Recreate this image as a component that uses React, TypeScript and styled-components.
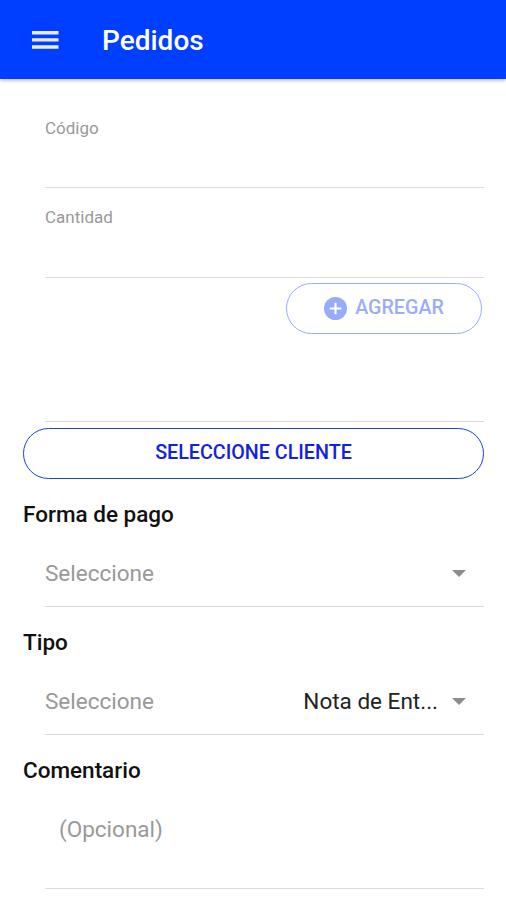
import React from 'react';
import styled, { createGlobalStyle } from 'styled-components';

const Global = createGlobalStyle`
  *, *::before, *::after { box-sizing: border-box; }
  body { margin: 0; background: #fff; font-family: Roboto, sans-serif; color: #111; }
`;

const Page = styled.div`
  width: 506px;
  height: 900px;
  overflow: hidden;
  background: #fff;
`;

const Header = styled.header`
  height: 79px;
  display: flex;
  align-items: center;
  padding: 2px 0 0 32px;
  background: #003fff;
  box-shadow: 0 1px 4px rgba(0, 0, 0, 0.35);
`;

const MenuButton = styled.button`
  width: 27px;
  height: 20px;
  padding: 0;
  border: 0;
  background: none;
  svg { display: block; }
`;

const Title = styled.h1`
  margin: 0 0 0 43px;
  color: #fff;
  font-size: 28px;
  line-height: 36px;
  font-weight: 500;
`;

const Form = styled.main`
  display: flex;
  flex-direction: column;
  padding: 20px 22px 0 23px;
`;

const Field = styled.label<{ $height: number }>`
  display: block;
  height: ${(p) => p.$height}px;
  margin-left: 22px;
  padding-top: 18px;
  border-bottom: 1px solid #dcdcdc;
  color: #999;
  font-size: 17px;
  line-height: 22px;
`;

const AddRow = styled.div`
  display: flex;
  justify-content: flex-end;
  height: 144px;
  margin-left: 22px;
  padding: 5px 2px 0 0;
  border-bottom: 1px solid #d9d9d9;
`;

const PillButton = styled.button<{ $faded?: boolean }>`
  display: flex;
  align-items: center;
  justify-content: center;
  gap: 8px;
  width: ${(p) => (p.$faded ? '196px' : '100%')};
  height: 51px;
  margin-top: ${(p) => (p.$faded ? 0 : 6)}px;
  padding: 0 0 1px;
  border: 1px solid ${(p) => (p.$faded ? '#96acf8' : '#1c40e4')};
  border-radius: 26px;
  background: #fff;
  color: ${(p) => (p.$faded ? '#9dacf6' : '#1022e0')};
  font: 500 19.7px/26px Roboto, sans-serif;
  svg { margin-top: 1px; }
`;

const SectionTitle = styled.h2`
  height: 30px;
  margin: 20px 0 1px;
  color: #111;
  font-size: 22.5px;
  line-height: 31px;
  font-weight: 500;
`;

const SelectRow = styled.div`
  display: flex;
  align-items: center;
  height: 77px;
  margin-left: 22px;
  padding: 10px 18px 0 0;
  border-bottom: 1px solid #d9d9d9;
  font-size: 22.5px;
  line-height: 30px;
`;

const Placeholder = styled.span`
  flex: 1;
  color: #999;
`;

const Value = styled.span`
  margin-right: 14px;
  color: #222;
`;

const Comment = styled.div`
  height: 103px;
  margin-left: 22px;
  padding: 28px 0 0 14px;
  border-bottom: 1px solid #dcdcdc;
  color: #999;
  font-size: 22.5px;
  line-height: 31px;
`;

const Arrow = () => (
  <svg width="14" height="7" viewBox="0 0 14 7"><path d="M0 0h14L7 7z" fill="#8c8c8c" /></svg>
);

export default function App() {
  return (
    <Page>
      <Global />
      <Header>
        <MenuButton aria-label="Menú">
          <svg width="27" height="20" viewBox="0 0 27 20" fill="#e8ecff">
            <path d="M0 0h26.5v3.4H0zM0 7.2h26.5v3.4H0zM0 14.3h26.5v3.4H0z" />
          </svg>
        </MenuButton>
        <Title>Pedidos</Title>
      </Header>
      <Form>
        <Field $height={89}>Código</Field>
        <Field $height={90}>Cantidad</Field>
        <AddRow>
          <PillButton $faded>
            <svg width="23" height="23" viewBox="0 0 24 24">
              <circle cx="12" cy="12" r="12" fill="#96acfa" />
              <path d="M12 6v12M6 12h12" stroke="#fff" strokeWidth="2.2" />
            </svg>
            AGREGAR
          </PillButton>
        </AddRow>
        <PillButton>SELECCIONE CLIENTE</PillButton>
        <SectionTitle>Forma de pago</SectionTitle>
        <SelectRow><Placeholder>Seleccione</Placeholder><Arrow /></SelectRow>
        <SectionTitle>Tipo</SectionTitle>
        <SelectRow><Placeholder>Seleccione</Placeholder><Value>Nota de Ent...</Value><Arrow /></SelectRow>
        <SectionTitle>Comentario</SectionTitle>
        <Comment>(Opcional)</Comment>
      </Form>
    </Page>
  );
}
